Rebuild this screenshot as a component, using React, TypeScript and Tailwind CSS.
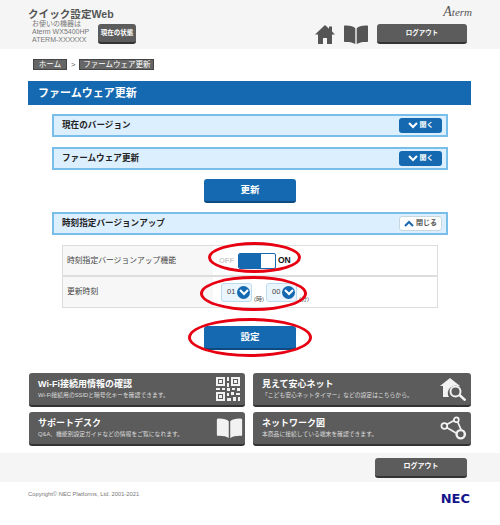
const fontStack = "font-['Liberation_Sans','Noto_Sans_CJK_JP',sans-serif]"

const Chevron = ({ up = false }: { up?: boolean }) => (
  <svg width="10" height="7" viewBox="0 0 10 7" fill="none" stroke="currentColor" strokeWidth="2">
    <path d={up ? "M1 6l4-4 4 4" : "M1 1l4 4 4-4"} />
  </svg>
)

const Accordion = ({ title, open = false }: { title: string; open?: boolean }) => (
  <div className="mx-[52px] flex h-[23px] items-center justify-between border-2 border-[#79bdea] bg-[#dcefff] pl-[8px] pr-[4px]">
    <span className="text-[8.6px] font-bold leading-none text-[#222]">{title}</span>
    {open ? (
      <span className="flex h-[15px] w-[43px] items-center justify-center gap-[2px] rounded-[3px] border border-[#c8d6e0] bg-white text-[#1a6ab0]">
        <Chevron up />
        <span className="text-[7px] font-bold text-[#555]">閉じる</span>
      </span>
    ) : (
      <span className="flex h-[15px] w-[43px] items-center justify-center gap-[2px] rounded-[3px] bg-[#1569b0] text-white">
        <Chevron />
        <span className="text-[7px] font-bold">開く</span>
      </span>
    )}
  </div>
)

const BlueButton = ({ label }: { label: string }) => (
  <div className="flex justify-center">
    <div className="flex h-[24px] w-[92px] items-center justify-center rounded-[3px] border-b-2 border-[#0d4a80] bg-[#1569b0] text-[9.5px] font-bold text-white">
      {label}
    </div>
  </div>
)

const GreyButton = ({ label, className }: { label: string; className: string }) => (
  <div
    className={`flex h-[20px] items-center justify-center rounded-[3px] border-b-2 border-[#333] bg-[#5c5c5c] font-bold text-white ${className}`}
  >
    {label}
  </div>
)

const BookIcon = ({ color, w, h }: { color: string; w: number; h: number }) => (
  <svg width={w} height={h} viewBox="0 0 24 19" fill={color}>
    <path d="M11.3 3.2C9.5 1.2 5.5.4 1 .6c-.6 0-1 .4-1 1V16c0 .6.5 1 1 1 4-.2 7.8.4 10.3 2zM12.7 3.2C14.5 1.2 18.5.4 23 .6c.6 0 1 .4 1 1V16c0 .6-.5 1-1 1-4-.2-7.8.4-10.3 2z" />
  </svg>
)

const HomeIcon = () => (
  <svg width="20" height="19" viewBox="0 0 20 19" fill="#555">
    <path d="M10 0L0 9.5h3V19h5v-6h4v6h5V9.5h3l-3-2.9V1.5h-3v2.3z" />
  </svg>
)

const QrIcon = () => (
  <svg width="24" height="24" viewBox="0 0 24 24" fill="#f2f2f2">
    <path d="M0 0h9v9H0zM2 2v5h5V2zM15 0h9v9h-9zM17 2v5h5V2zM0 15h9v9H0zM2 17v5h5v-5z" fillRule="evenodd" />
    <path d="M3 3h3v3H3zM18 3h3v3h-3zM3 18h3v3H3zM11 0h2v4h-2zM11 6h2v4h-2zM0 11h4v2H0zM6 11h3v2H6zM11 11h3v3h-3zM16 11h3v2h-3zM21 11h3v3h-3zM11 16h2v3h-2zM15 15h3v3h-3zM20 16h4v2h-4zM11 21h4v3h-4zM17 20h3v4h-3zM22 20h2v4h-2z" />
  </svg>
)

const HouseSearchIcon = () => (
  <svg width="26" height="23" viewBox="0 0 26 23">
    <path d="M10 0L0 8h3v11h6a7.5 7.5 0 0 1 10-10.5L20 8z" fill="#f2f2f2" />
    <circle cx="15.5" cy="13.5" r="5" fill="none" stroke="#f2f2f2" strokeWidth="2" />
    <path d="M19.5 17l6 5.5" stroke="#f2f2f2" strokeWidth="2.5" />
  </svg>
)

const NetworkIcon = () => (
  <svg width="26" height="24" viewBox="0 0 27 24" fill="none" stroke="#f2f2f2" strokeWidth="1.8">
    <path d="M6 9l9-5M6 11l12 7M18 5l4 9" />
    <circle cx="4.5" cy="10" r="3" fill="#5c5c5c" />
    <circle cx="17" cy="3.5" r="2.5" fill="#5c5c5c" />
    <circle cx="21.5" cy="18.5" r="4.3" fill="#5c5c5c" strokeWidth="2.5" />
  </svg>
)

const Card = ({ title, desc, icon }: { title: string; desc: string; icon: React.ReactNode }) => (
  <div className="flex h-[34px] items-center justify-between rounded-[3px] border-b-2 border-[#333] bg-[#5c5c5c] pl-[9px] pr-[5px] text-white">
    <div className="flex flex-col gap-[4px]">
      <span className="text-[9px] font-bold leading-none">{title}</span>
      <span className="text-[5.8px] leading-none text-[#ddd]">{desc}</span>
    </div>
    {icon}
  </div>
)

const TimeSelect = ({ value, unit }: { value: string; unit: string }) => (
  <div className="flex items-end gap-[2px]">
    <div className="flex h-[19px] w-[31px] items-center justify-between rounded-[3px] border border-[#bcdcf2] bg-[#eaf5fd] pl-[5px] pr-[1px]">
      <span className="text-[7.5px] text-[#444]">{value}</span>
      <span className="flex h-[13px] w-[13px] items-center justify-center rounded-full bg-[#1569b0] text-white">
        <Chevron />
      </span>
    </div>
    <span className="text-[6px] leading-none text-[#555]">{unit}</span>
  </div>
)

export default function App() {
  return (
    <div className={`relative h-[525px] w-[500px] overflow-hidden bg-white ${fontStack}`}>
      {/* header */}
      <header className="flex h-[49px] items-end justify-between bg-[#f5f5f5] pb-[5px] pl-[28px] pr-[33px]">
        <div>
          <div className="text-[10.6px] font-bold leading-[12px] text-[#555]">クイック設定Web</div>
          <div className="flex items-end pl-[4px]">
            <div className="w-[66px] text-[7px] leading-[8px] text-[#777]">
              <div>お使いの機器は</div>
              <div>Aterm WX5400HP</div>
              <div>ATERM-XXXXXX</div>
            </div>
            <GreyButton label="現在の状態" className="w-[38px] text-[6.5px]" />
          </div>
        </div>
        <div className="flex flex-col items-end">
          <div className="-mr-[5px] pb-[5px] font-['Liberation_Serif',serif] text-[11px] italic leading-[14px] text-[#555]">
            <span className="text-[14px]">A</span>term
          </div>
          <div className="flex items-center">
            <HomeIcon />
            <div className="ml-[9px] mr-[9px]">
              <BookIcon color="#555" w={24} h={19} />
            </div>
            <GreyButton label="ログアウト" className="w-[90px] text-[6.5px]" />
          </div>
        </div>
      </header>

      {/* breadcrumb */}
      <nav className="flex items-center gap-[4px] pl-[33px] pt-[10px] text-[7.5px] leading-none">
        <span className="flex h-[11px] w-[34px] items-center justify-center border border-[#444] bg-[#666] text-white">ホーム</span>
        <span className="text-[#555]">&gt;</span>
        <span className="flex h-[11px] w-[75px] items-center justify-center border border-[#444] bg-[#666] text-white">ファームウェア更新</span>
      </nav>

      {/* title */}
      <h1 className="ml-[28px] mr-[29px] mt-[11px] flex h-[24px] items-center bg-[#1569b0] pl-[10px] text-[11px] font-bold text-white">
        ファームウェア更新
      </h1>

      <main className="flex flex-col pt-[9px]">
        <Accordion title="現在のバージョン" />
        <div className="h-[10px]" />
        <Accordion title="ファームウェア更新" />
        <div className="h-[9px]" />
        <BlueButton label="更新" />
        <div className="h-[9px]" />
        <Accordion title="時刻指定バージョンアップ" open />

        <div className="mx-[62px] mt-[10px] border border-[#ddd] text-[7.8px] text-[#444]">
          <div className="flex h-[31px] border-b-2 border-[#ddd]">
            <div className="flex w-[150px] items-center bg-[#f7f7f7] pl-[4px]">時刻指定バージョンアップ機能</div>
            <div className="flex flex-1 items-center pl-[6px]">
              <span className="mr-[4px] text-[7.5px] font-bold text-[#ccc]">OFF</span>
              <span className="flex h-[16px] w-[38px] overflow-hidden rounded-[2px] border border-[#1569b0] bg-white">
                <span className="w-[22px] bg-[#1569b0]" />
              </span>
              <span className="ml-[2px] text-[8.5px] font-bold text-[#111]">ON</span>
            </div>
          </div>
          <div className="flex h-[30px]">
            <div className="flex w-[150px] items-center bg-[#f7f7f7] pl-[4px]">更新時刻</div>
            <div className="flex flex-1 items-center gap-[2px] pl-[8px]">
              <TimeSelect value="01" unit="(時)" />
              <TimeSelect value="00" unit="(分)" />
            </div>
          </div>
        </div>

        <div className="h-[18px]" />
        <BlueButton label="設定" />

        <section className="mx-[29px] mt-[23px] grid grid-cols-[216px_218px] gap-x-[8px] gap-y-[5px]">
          <Card title="Wi-Fi接続用情報の確認" desc="Wi-Fi接続用のSSIDと暗号化キーを確認できます。" icon={<QrIcon />} />
          <Card title="見えて安心ネット" desc="「こども安心ネットタイマー」などの設定はこちらから。" icon={<HouseSearchIcon />} />
          <Card
            title="サポートデスク"
            desc="Q&A、機能別設定ガイドなどの情報をご覧になれます。"
            icon={
              <div className="-mr-[3px]">
                <BookIcon color="#f2f2f2" w={27} h={20} />
              </div>
            }
          />
          <Card title="ネットワーク図" desc="本商品に接続している端末を確認できます。" icon={<NetworkIcon />} />
        </section>
      </main>

      {/* footer */}
      <div className="mt-[7px] flex h-[29px] items-center justify-end bg-[#f5f5f5] pr-[33px]">
        <GreyButton label="ログアウト" className="w-[92px] text-[7px]" />
      </div>
      <footer className="flex items-start justify-between pl-[28px] pr-[30px] pt-[8px]">
        <span className="text-[5.8px] leading-[8px] text-[#777]">Copyright© NEC Platforms, Ltd. 2001-2021</span>
        <span className="mt-[4px] font-['DejaVu_Sans',sans-serif] text-[13px] font-bold leading-[10px] text-[#14148c]">NEC</span>
      </footer>

      {/* red annotation ellipses */}
      <div className="absolute left-[208px] top-[242px] h-[31px] w-[93px] rounded-[50%] border-[3px] border-[#e60012]" />
      <div className="absolute left-[200px] top-[276px] h-[35px] w-[107px] rounded-[50%] border-[3px] border-[#e60012]" />
      <div className="absolute left-[188px] top-[318px] h-[39px] w-[124px] rounded-[50%] border-[3px] border-[#e60012]" />
    </div>
  )
}
